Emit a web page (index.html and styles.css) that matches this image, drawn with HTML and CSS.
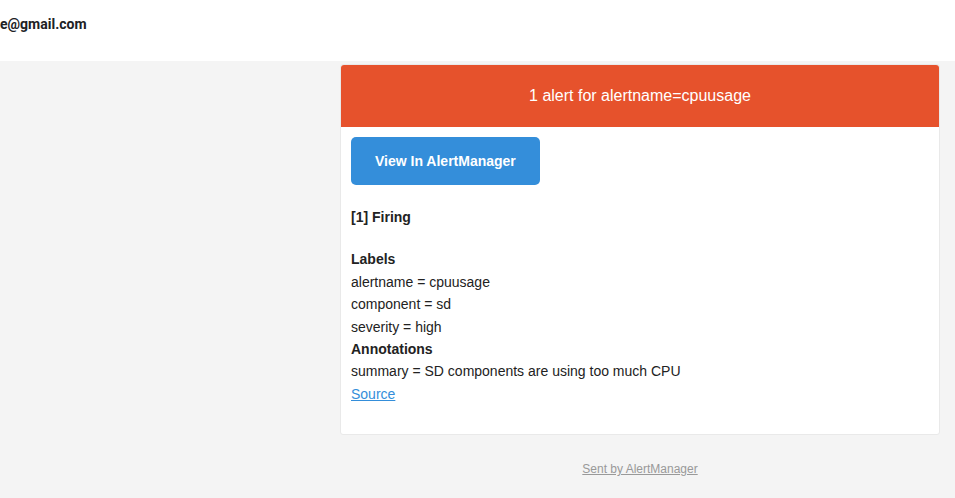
FILE: index.html
```html
<!DOCTYPE html>
<html>
<head>
<meta charset="utf-8">
<link rel="stylesheet" href="styles.css">
</head>
<body>
<div class="topbar"><span class="email">e@gmail.com</span></div>
<div class="main">
  <div class="wrap">
    <div class="card">
      <div class="alert">1 alert for alertname=cpuusage</div>
      <div class="content">
        <div class="block"><a class="btn" href="#">View In AlertManager</a></div>
        <div class="block"><strong>[1] Firing</strong></div>
        <div class="block">
          <strong>Labels</strong><br>
          alertname = cpuusage<br>
          component = sd<br>
          severity = high<br>
          <strong>Annotations</strong><br>
          summary = SD components are using too much CPU<br>
          <a class="link" href="#">Source</a>
        </div>
      </div>
    </div>
    <div class="footer"><a href="#">Sent by AlertManager</a></div>
  </div>
</div>
</body>
</html>
```
FILE: styles.css
```css
html, body {
  margin: 0;
  padding: 0;
  height: 100%;
}
body {
  background: #f4f4f4;
  font-family: "Liberation Sans", Arial, sans-serif;
  font-size: 14px;
  color: #222;
}
.topbar {
  background: #fff;
  height: 61px;
  box-sizing: border-box;
  padding-top: 15px;
}
.email {
  font-family: Roboto, "Liberation Sans", sans-serif;
  font-weight: 700;
  font-size: 14px;
  color: #202124;
  line-height: 18px;
}
.main {
  padding: 3px 15px 0 340px;
}
.wrap {
  width: 600px;
}
.card {
  background: #fff;
  border: 1px solid #e9e9e9;
  border-radius: 3px;
}
.alert {
  background: #e6522c;
  color: #fff;
  font-size: 16px;
  line-height: 22px;
  padding: 20px;
  text-align: center;
  border-radius: 3px 3px 0 0;
}
.content {
  padding: 10px;
  line-height: 22.4px;
}
.block {
  padding-bottom: 20px;
}
.block + .block {
  padding-top: 1px;
  padding-bottom: 19px;
}
.btn {
  display: inline-block;
  background: #348eda;
  color: #fff;
  font-weight: 700;
  font-size: 14px;
  line-height: 28px;
  padding: 10px 24px;
  border-radius: 5px;
  text-decoration: none;
}
.link {
  color: #348eda;
  text-decoration: underline;
}
.footer {
  padding: 25px 0 20px;
  text-align: center;
  font-size: 12px;
  line-height: 19px;
}
.footer a {
  color: #999;
  text-decoration: underline;
}
```
